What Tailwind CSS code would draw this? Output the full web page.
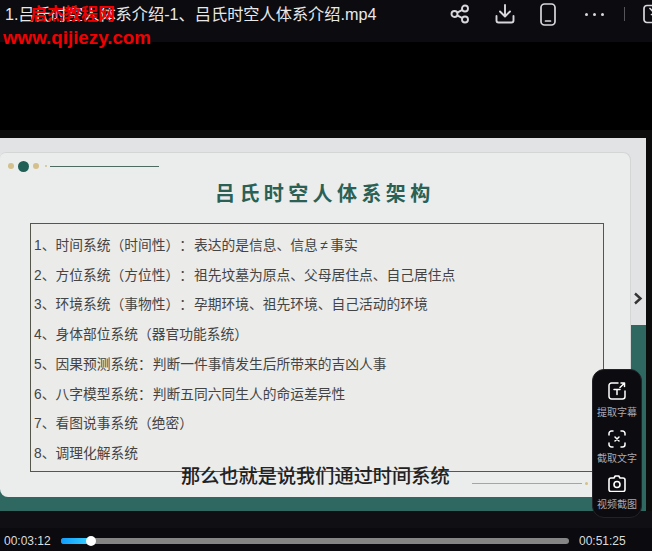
<!DOCTYPE html>
<html lang="zh-CN">

<head>
    <meta charset="UTF-8">
    <title>吕氏时空人体系介绍</title>
    <script src="https://cdn.jsdelivr.net/npm/@tailwindcss/browser@4"></script>
</head>

<body class="bg-black font-['Liberation_Sans','Noto_Sans_CJK_SC',sans-serif]">
    <div class="relative w-[652px] h-[551px] overflow-hidden flex flex-col">
        <!-- Header -->
        <div class="h-[42px] shrink-0 bg-[#0b0b10]">
            <p class="pl-[5px] text-[16.2px] leading-[28px] text-[#e8e8e8] whitespace-nowrap">1.吕氏时空人体系介绍-1、吕氏时空人体系介绍.mp4</p>
        </div>
        <div class="absolute top-0 left-[450px] h-[28px] flex items-center text-[#d8d8dc]">
            <svg class="w-[20px] h-[20px]" viewBox="0 0 20 20" fill="none" stroke="currentColor" stroke-width="1.9"><circle cx="4.5" cy="10" r="3"/><circle cx="15" cy="4.5" r="3"/><circle cx="15" cy="15.5" r="3"/><path d="M7.2 8.6l5.2-2.8M7.2 11.4l5.2 2.8"/></svg>
            <svg class="w-[20px] h-[20px] ml-[25px]" viewBox="0 0 20 20" fill="none" stroke="currentColor" stroke-width="1.9" stroke-linecap="round" stroke-linejoin="round"><path d="M10 1v11M5 7.5l5 5 5-5M1.5 12v4.5a2 2 0 0 0 2 2h13a2 2 0 0 0 2-2V12"/></svg>
            <svg class="w-[16px] h-[23px] ml-[25px]" viewBox="0 0 16 23" fill="none" stroke="currentColor" stroke-width="1.7" stroke-linecap="round"><rect x="1" y="1" width="14" height="21" rx="3.5"/><path d="M5.5 18h5"/></svg>
            <div class="flex gap-[5px] ml-[29px]"><span class="w-[3px] h-[3px] rounded-full bg-[#d8d8dc]"></span><span class="w-[3px] h-[3px] rounded-full bg-[#d8d8dc]"></span><span class="w-[3px] h-[3px] rounded-full bg-[#d8d8dc]"></span></div>
            <span class="w-px h-[14px] bg-[#55555a] ml-[20px]"></span>
            <svg class="w-[16px] h-[20px] ml-[18px] shrink-0" viewBox="0 0 16 20" fill="none" stroke="currentColor" stroke-width="1.7" stroke-linecap="round"><rect x="1" y="1.5" width="22" height="17" rx="3"/><path d="M7 4.5l6 6M13 6v4.5H8.5"/></svg>
        </div>

        <!-- Black space above the video picture -->
        <div class="h-[96px] shrink-0 bg-[linear-gradient(#000_88px,#0c0c0c_88px)]"></div>

        <!-- Slide -->
        <div class="h-[373px] shrink-0 flex">
            <div class="w-[646px] pt-[14px] bg-[linear-gradient(#e2e3e4_187px,#2f6860_187px)]">
                <div class="w-[631px] h-[345px] bg-[#ebecec] rounded-tr-[8px] rounded-br-[8px] rounded-tl-[6px] rounded-bl-[8px] border-t border-r border-[#d4d5d5] flex flex-col pl-[8px]">
                    <div class="flex items-center h-[26px]">
                        <span class="w-[6px] h-[6px] rounded-full bg-[#d3c08c]"></span>
                        <span class="w-[11px] h-[11px] rounded-full bg-[#1f5f55] ml-[4px]"></span>
                        <span class="w-[6px] h-[6px] rounded-full bg-[#d3c08c] ml-[4px]"></span>
                        <span class="w-[2px] h-[2px] rounded-full bg-[#d3c08c] ml-[6px]"></span>
                        <span class="w-[109px] h-px bg-[#4f6a62] ml-[3px]"></span>
                    </div>
                    <h1 class="ml-[207px] h-[44px] text-[20px] leading-[30px] font-bold tracking-[4.4px] text-[#2a6154] whitespace-nowrap">吕氏时空人体系架构</h1>
                    <div class="ml-[22px] w-[574px] h-[249px] border border-[#55574c] bg-[#ebebe9] px-[3px] pt-[7px] text-[13.75px] leading-[29.7px] [word-spacing:-2.8px] [text-spacing-trim:space-all] text-[#444444]">
                        <p>1、时间系统（时间性）： 表达的是信息、信息<span class="px-[2.5px]">≠</span>事实</p>
                        <p>2、方位系统（方位性）： 祖先坟墓为原点、父母居住点、自己居住点</p>
                        <p>3、环境系统（事物性）： 孕期环境、祖先环境、自己活动的环境</p>
                        <p>4、身体部位系统（器官功能系统）</p>
                        <p>5、因果预测系统： 判断一件事情发生后所带来的吉凶人事</p>
                        <p>6、八字模型系统： 判断五同六同生人的命运差异性</p>
                        <p>7、看图说事系统（绝密）</p>
                        <p>8、调理化解系统</p>
                    </div>
                </div>
            </div>
            <div class="w-[6px] bg-[#0c0c0c]"></div>
        </div>

        <div class="h-[17px] shrink-0 bg-[#101014]"></div>

        <!-- Progress bar -->
        <div class="flex-1 bg-[#0a0a0f] flex items-center pt-[2px] text-[12px] text-[#dcdcdc]">
            <span class="ml-[4px] w-[57px]">00:03:12</span>
            <div class="w-[508px] h-[6px] rounded-full bg-[#858585] relative">
                <div class="w-[30px] h-[6px] rounded-full bg-linear-to-r from-[#0f9dff] to-[#3ad0ff]"></div>
                <span class="absolute left-[25px] top-[-2px] w-[10px] h-[10px] rounded-full bg-white"></span>
            </div>
            <span class="ml-[10px]">00:51:25</span>
        </div>

        <!-- Watermark -->
        <div class="absolute left-[3px] top-[6px] font-bold text-[#f00000] whitespace-nowrap">
            <p class="ml-[27px] text-[17px] leading-[18px]">启杰教程网</p>
            <p class="text-[18.75px] leading-[22px] mt-[3px]">www.qijiezy.com</p>
        </div>

        <!-- Next arrow -->
        <svg class="absolute left-[633px] top-[292px] w-[10px] h-[13px]" viewBox="0 0 10 13" fill="none" stroke="#333" stroke-width="2.4"><path d="M2 1.5l5.5 5-5.5 5"/></svg>

        <!-- Subtitle -->
        <p class="absolute left-[181px] top-[463px] text-[19.2px] leading-[28px] font-medium text-[#222222] whitespace-nowrap">那么也就是说我们通过时间系统</p>

        <!-- Slide footer line -->
        <div class="absolute left-[472px] top-[482px] flex items-center">
            <span class="w-[110px] h-px bg-[#8fb0a6]"></span>
            <span class="w-[3px] h-[3px] rounded-full bg-[#d3c08c] ml-[3px]"></span>
        </div>

        <!-- Side tools -->
        <div class="absolute left-[592px] top-[369px] w-[50px] h-[149px] rounded-[12px] bg-[#0b0b10] border border-[#222228] flex flex-col items-center pt-[12px] text-[10px] leading-[14px] text-[#a9a9b4]">
            <svg class="w-[18px] h-[18px] text-white" viewBox="0 0 18 18" fill="none" stroke="currentColor" stroke-width="1.5" stroke-linecap="round" stroke-linejoin="round"><path d="M10 1H3.500A2.500 2.500 0 0 0 1 3.500v11A2.500 2.500 0 0 0 3.500 17h11a2.500 2.500 0 0 0 2.500-2.500V9"/><path d="M12 5.500L16.500 1M13 1h3.500v3.500"/><path d="M6 7.500h6M9 7.500v5"/></svg>
            <span class="mt-[6px] whitespace-nowrap">提取字幕</span>
            <svg class="w-[18px] h-[18px] text-white mt-[10px]" viewBox="0 0 18 18" fill="none" stroke="currentColor" stroke-width="1.500" stroke-linecap="round"><path d="M1 5V3.500A2.500 2.500 0 0 1 3.500 1H5M13 1h1.500A2.500 2.500 0 0 1 17 3.500V5M17 13v1.500a2.500 2.500 0 0 1-2.500 2.500H13M5 17H3.500A2.500 2.500 0 0 1 1 14.500V13"/><path d="M7 7l4 4M11 7l-4 4"/></svg>
            <span class="mt-[4px] whitespace-nowrap">截取文字</span>
            <svg class="w-[18px] h-[17px] text-white mt-[9px]" viewBox="0 0 18 17" fill="none" stroke="currentColor" stroke-width="1.600" stroke-linejoin="round"><path d="M6 3l1.200-2h3.600L12 3h3a2 2 0 0 1 2 2v9.500a2 2 0 0 1-2 2H3a2 2 0 0 1-2-2V5a2 2 0 0 1 2-2z"/><circle cx="9" cy="9.500" r="3"/></svg>
            <span class="mt-[6px] whitespace-nowrap">视频截图</span>
        </div>
    </div>
</body>

</html>
